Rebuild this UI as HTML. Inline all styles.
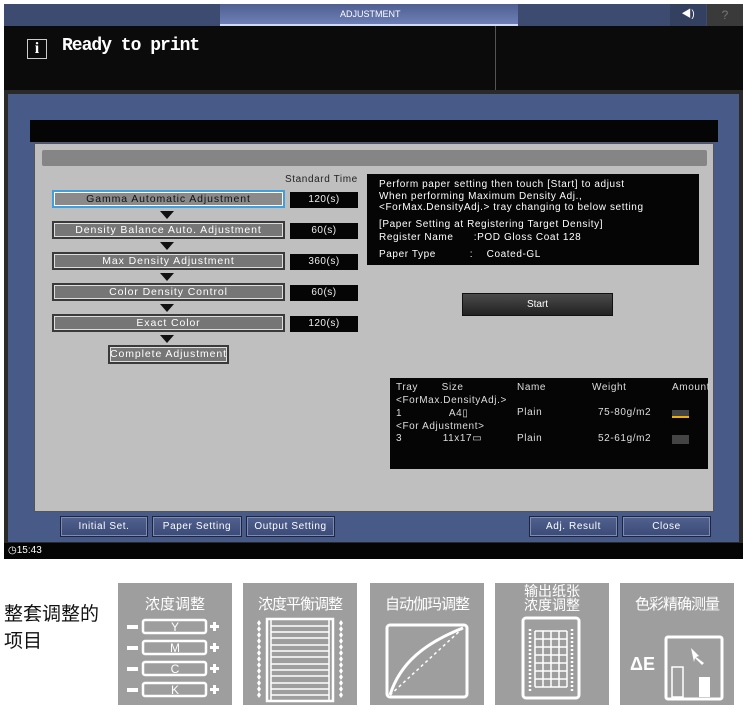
<!DOCTYPE html>
<html><head><meta charset="utf-8"><style>
*{margin:0;padding:0;box-sizing:border-box}
body{width:747px;height:712px;background:#fff;position:relative;overflow:hidden;font-family:"Liberation Sans","Noto Sans CJK SC",sans-serif}
.a{position:absolute}
.t{font-family:"Liberation Sans",sans-serif;font-size:10px;color:#fff;white-space:pre;letter-spacing:0.6px}
.step{position:absolute;left:52px;width:233px;height:18px;background:#767676;border:2px solid #3a3a3a;box-shadow:inset 0 0 0 1px #ddd;color:#fff;font-size:10.5px;text-align:center;line-height:14px;letter-spacing:0.9px}
.time{position:absolute;left:290px;width:68px;height:16px;background:#050505;color:#eee;font-size:10px;text-align:center;line-height:16px;letter-spacing:0.5px}
.tri{position:absolute;left:160px;width:0;height:0;border-left:7px solid transparent;border-right:7px solid transparent;border-top:8px solid #111}
.btn{position:absolute;top:516px;height:21px;background:linear-gradient(#51618f,#3b4a76);border:1px solid #1c2440;box-shadow:inset 0 0 0 1px #7d8bb3;color:#fff;font-size:10px;text-align:center;line-height:19px;letter-spacing:0.6px}
.tile{position:absolute;top:583px;width:114px;height:122px;background:#9e9e9e;color:#fff;font-size:15px;text-align:center}
</style></head><body>
<div class="a" style="left:4px;top:4px;width:739px;height:555px;background:#0b0b0b"></div>
<div class="a" style="left:4px;top:4px;width:739px;height:22px;background:#3e4b70"></div>
<div class="a" style="left:220px;top:4px;width:298px;height:22px;background:linear-gradient(#4f5f92,#6d7fb5);border-bottom:2px solid #cfd8f5"></div>
<div class="a t" style="left:340px;top:9px;font-size:9px;letter-spacing:0">ADJUSTMENT</div>
<div class="a" style="left:670px;top:4px;width:36px;height:22px;background:#34405f;color:#fff;font-size:10px;text-align:center;line-height:22px">◀)</div>
<div class="a" style="left:707px;top:4px;width:36px;height:22px;background:#3a3a3a;color:#777;font-size:12px;text-align:center;line-height:22px">?</div>
<div class="a" style="left:495px;top:26px;width:1px;height:64px;background:#555"></div>
<div class="a" style="left:27px;top:39px;width:20px;height:20px;border:1px solid #ccc;color:#fff;font-family:'Liberation Serif',serif;font-size:16px;font-weight:bold;text-align:center;line-height:18px">i</div>
<div class="a" style="left:62px;top:36px;color:#fff;font-family:'Liberation Mono',monospace;font-size:18px;font-weight:bold;letter-spacing:-1px">Ready to print</div>
<div class="a" style="left:4px;top:90px;width:739px;height:454px;background:#2a2a2a"></div>
<div class="a" style="left:8px;top:94px;width:731px;height:448px;background:#485a88"></div>
<div class="a" style="left:30px;top:120px;width:688px;height:22px;background:#050505"></div>
<div class="a" style="left:34px;top:143px;width:680px;height:369px;background:#bfbfbf;border:1px solid #555"></div>
<div class="a" style="left:42px;top:150px;width:665px;height:16px;background:#858585;border-radius:2px"></div>
<div class="a t" style="left:285px;top:174px;color:#222">Standard Time</div>
<div class="step" style="top:190px;border-color:#3fa0e0;box-shadow:inset 0 0 0 1px #fff;color:#111;background:#8a8a8a">Gamma Automatic Adjustment</div>
<div class="time" style="top:192px">120(s)</div>
<div class="tri" style="top:211px"></div>
<div class="step" style="top:221px">Density Balance Auto. Adjustment</div>
<div class="time" style="top:223px">60(s)</div>
<div class="tri" style="top:242px"></div>
<div class="step" style="top:252px">Max Density Adjustment</div>
<div class="time" style="top:254px">360(s)</div>
<div class="tri" style="top:273px"></div>
<div class="step" style="top:283px">Color Density Control</div>
<div class="time" style="top:285px">60(s)</div>
<div class="tri" style="top:304px"></div>
<div class="step" style="top:314px">Exact Color</div>
<div class="time" style="top:316px">120(s)</div>
<div class="tri" style="top:335px"></div>
<div class="step" style="top:345px;left:108px;width:121px;height:19px">Complete Adjustment</div>
<div class="a" style="left:367px;top:174px;width:332px;height:91px;background:#050505"></div>
<div class="a t" style="left:379px;top:179px;line-height:11.5px">Perform paper setting then touch [Start] to adjust
When performing Maximum Density Adj.,
&lt;ForMax.DensityAdj.&gt; tray changing to below setting</div>
<div class="a t" style="left:379px;top:218px;line-height:13px">[Paper Setting at Registering Target Density]
Register Name      :POD Gloss Coat 128</div>
<div class="a t" style="left:379px;top:249px">Paper Type          :    Coated-GL</div>
<div class="a" style="left:462px;top:293px;width:151px;height:23px;background:linear-gradient(#4a4a4a,#222);border:1px solid #111;color:#fff;font-size:10px;text-align:center;line-height:21px">Start</div>
<div class="a" style="left:390px;top:378px;width:318px;height:91px;background:#050505"></div>
<div class="a t" style="left:396px;top:382px;color:#ddd">Tray       Size</div>
<div class="a t" style="left:517px;top:382px;color:#ddd">Name</div>
<div class="a t" style="left:592px;top:382px;color:#ddd">Weight</div>
<div class="a t" style="left:672px;top:382px;color:#ddd">Amount</div>
<div class="a t" style="left:396px;top:395px;color:#ddd;line-height:12.8px">&lt;ForMax.DensityAdj.&gt;
1              A4▯
&lt;For Adjustment&gt;
3            11x17▭</div>
<div class="a t" style="left:517px;top:400px;color:#ddd;line-height:25.6px">Plain
Plain</div>
<div class="a t" style="left:598px;top:400px;color:#ddd;line-height:25.6px">75-80g/m2
52-61g/m2</div>
<div class="a" style="left:672px;top:410px;width:17px;height:8px;background:#444;border-bottom:2px solid #f0b000"></div>
<div class="a" style="left:672px;top:435px;width:17px;height:9px;background:#444"></div>
<div class="btn" style="left:60px;width:88px">Initial Set.</div>
<div class="btn" style="left:152px;width:90px">Paper Setting</div>
<div class="btn" style="left:246px;width:89px">Output Setting</div>
<div class="btn" style="left:529px;width:89px">Adj. Result</div>
<div class="btn" style="left:622px;width:89px">Close</div>
<div class="a" style="left:4px;top:543px;width:739px;height:16px;background:#050505"></div>
<div class="a t" style="left:8px;top:545px;font-size:10px;letter-spacing:0">◷15:43</div>
<div class="a" style="left:4px;top:601px;font-size:19px;line-height:27px;color:#111">整套调整的<br>项目</div>
<div class="tile" style="left:118px">
 <div style="margin-top:10px">浓度调整</div>
 <svg class="a" style="left:0;top:30px" width="114" height="92" viewBox="0 0 114 92">
  <g fill="none" stroke="#fff" stroke-width="2.5">
   <rect x="25" y="7" width="63" height="13" rx="2"/><rect x="25" y="28" width="63" height="13" rx="2"/>
   <rect x="25" y="49" width="63" height="13" rx="2"/><rect x="25" y="70" width="63" height="13" rx="2"/>
  </g>
  <g fill="#fff"><rect x="9" y="12" width="11" height="4"/><rect x="9" y="33" width="11" height="4"/><rect x="9" y="54" width="11" height="4"/><rect x="9" y="75" width="11" height="4"/>
  <path d="M92 12h3v-3h3v3h3v3h-3v3h-3v-3h-3z"/><path d="M92 33h3v-3h3v3h3v3h-3v3h-3v-3h-3z"/><path d="M92 54h3v-3h3v3h3v3h-3v3h-3v-3h-3z"/><path d="M92 75h3v-3h3v3h3v3h-3v3h-3v-3h-3z"/></g>
  <g fill="#fff" font-size="12" text-anchor="middle" font-family="Liberation Sans"><text x="57" y="18">Y</text><text x="57" y="39">M</text><text x="57" y="60">C</text><text x="57" y="81">K</text></g>
 </svg>
</div>
<div class="tile" style="left:243px">
 <div style="margin-top:10px;letter-spacing:-1px">浓度平衡调整</div>
 <svg class="a" style="left:0;top:30px" width="114" height="92" viewBox="0 0 114 92">
  <rect x="24" y="6" width="66" height="82" fill="none" stroke="#fff" stroke-width="2.5"/>
  <g stroke="#fff" stroke-width="1.5">
   <path d="M28 13h58M28 19h58M28 25h58M28 32h58M28 38h58M28 44h58M28 51h58M28 57h58M28 63h58M28 70h58M28 76h58M28 82h58M28 6v82M86 6v82"/></g>
  <g fill="#fff"><path d="M16 7l2 3-2 3-2-3zM16 13l2 3-2 3-2-3zM16 19l2 3-2 3-2-3zM16 25l2 3-2 3-2-3zM16 31l2 3-2 3-2-3zM16 37l2 3-2 3-2-3zM16 43l2 3-2 3-2-3zM16 49l2 3-2 3-2-3zM16 55l2 3-2 3-2-3zM16 61l2 3-2 3-2-3zM16 67l2 3-2 3-2-3zM16 73l2 3-2 3-2-3zM16 79l2 3-2 3-2-3z"/>
  <path d="M98 7l2 3-2 3-2-3zM98 13l2 3-2 3-2-3zM98 19l2 3-2 3-2-3zM98 25l2 3-2 3-2-3zM98 31l2 3-2 3-2-3zM98 37l2 3-2 3-2-3zM98 43l2 3-2 3-2-3zM98 49l2 3-2 3-2-3zM98 55l2 3-2 3-2-3zM98 61l2 3-2 3-2-3zM98 67l2 3-2 3-2-3zM98 73l2 3-2 3-2-3zM98 79l2 3-2 3-2-3z"/></g>
 </svg>
</div>
<div class="tile" style="left:370px">
 <div style="margin-top:10px;letter-spacing:-1px">自动伽玛调整</div>
 <svg class="a" style="left:0;top:30px" width="114" height="92" viewBox="0 0 114 92">
  <rect x="17" y="12" width="80" height="72" rx="3" fill="none" stroke="#fff" stroke-width="3"/>
  <path d="M20 82C30 50 55 30 93 15" fill="none" stroke="#fff" stroke-width="3"/>
  <path d="M20 82L93 15" fill="none" stroke="#fff" stroke-width="1.5" stroke-dasharray="3 3"/>
 </svg>
</div>
<div class="tile" style="left:495px">
 <div style="margin-top:1px;font-size:14px;line-height:14px">输出纸张<br>浓度调整</div>
 <svg class="a" style="left:0;top:30px" width="114" height="92" viewBox="0 0 114 92">
  <rect x="28" y="5" width="56" height="80" rx="3" fill="none" stroke="#fff" stroke-width="3"/>
  <g stroke="#fff" stroke-width="1.5">
   <path d="M40 18h32M40 26h32M40 34h32M40 42h32M40 50h32M40 58h32M40 66h32M40 74h32M40 18v56M48 18v56M56 18v56M64 18v56M72 18v56"/></g>
  <path d="M35 16v62M77 16v62" stroke="#fff" stroke-width="2.5" stroke-dasharray="2 2"/>
 </svg>
</div>
<div class="tile" style="left:620px">
 <div style="margin-top:10px;letter-spacing:-1px">色彩精确测量</div>
 <svg class="a" style="left:0;top:30px" width="114" height="92" viewBox="0 0 114 92">
  <text x="10" y="57" fill="#fff" font-size="18" font-weight="bold" font-family="Liberation Sans">ΔE</text>
  <rect x="46" y="24" width="56" height="62" rx="2" fill="none" stroke="#fff" stroke-width="3"/>
  <rect x="52" y="54" width="11" height="30" fill="none" stroke="#fff" stroke-width="1.5"/>
  <rect x="79" y="64" width="11" height="20" fill="#fff"/>
  <path d="M71 35l8 8-3 1 8 6-2 2-7-7-1 4z" fill="#fff"/>
 </svg>
</div>
</body></html>
